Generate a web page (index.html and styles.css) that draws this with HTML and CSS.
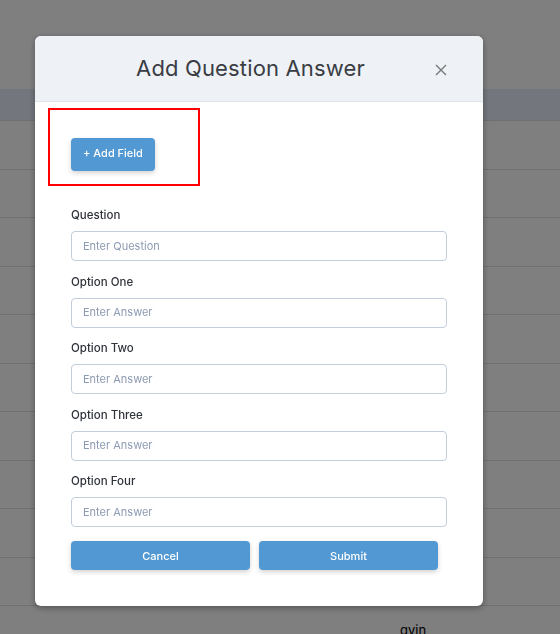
FILE: index.html
```html
<!DOCTYPE html>
<html>
<head>
<meta charset="utf-8">
<link rel="stylesheet" href="styles.css">
</head>
<body>
<div class="page">
  <div class="page-top"></div>
  <div class="table-head"></div>
  <div class="row"></div>
  <div class="row"></div>
  <div class="row"></div>
  <div class="row"></div>
  <div class="row"></div>
  <div class="row"></div>
  <div class="row"></div>
  <div class="row"></div>
  <div class="row"></div>
  <div class="row"></div>
  <div class="row last"><span class="cell-text">gvjn</span></div>
</div>
<div class="overlay">
  <div class="modal">
    <div class="modal-header">
      <h2 class="modal-title">Add Question Answer</h2>
      <button class="close" aria-label="Close">
        <svg width="12" height="12" viewBox="0 0 12 12"><path d="M1 1 L11 11 M11 1 L1 11" stroke="#777" stroke-width="1.4" fill="none"/></svg>
      </button>
    </div>
    <div class="modal-body">
      <div class="highlight">
        <button class="btn add-btn">+ Add Field</button>
      </div>
      <form class="form">
        <div class="field">
          <label class="label">Question</label>
          <input class="input" placeholder="Enter Question">
        </div>
        <div class="field">
          <label class="label">Option One</label>
          <input class="input" placeholder="Enter Answer">
        </div>
        <div class="field">
          <label class="label">Option Two</label>
          <input class="input" placeholder="Enter Answer">
        </div>
        <div class="field">
          <label class="label">Option Three</label>
          <input class="input" placeholder="Enter Answer">
        </div>
        <div class="field">
          <label class="label">Option Four</label>
          <input class="input" placeholder="Enter Answer">
        </div>
        <div class="actions">
          <button type="button" class="btn action-btn">Cancel</button>
          <button type="button" class="btn action-btn">Submit</button>
        </div>
      </form>
    </div>
  </div>
</div>
</body>
</html>
```
FILE: styles.css
```css
* { box-sizing: border-box; }
html, body { margin: 0; padding: 0; }
body {
  width: 560px;
  height: 634px;
  overflow: hidden;
  background: #ffffff;
  font-family: Inter, "Open Sans", sans-serif;
}
.page { height: 634px; }
.page-top { height: 89px; }
.table-head { height: 32px; background: #e6eefa; border-bottom: 1px solid #dcdce6; }
.row { height: 48.5px; border-bottom: 1px solid #dedee8; position: relative; }
.row.last { border-bottom: none; }
.cell-text {
  position: absolute;
  left: 400px;
  top: 16px;
  font-size: 13px;
  color: #000;
}
.overlay {
  position: fixed;
  inset: 0;
  background: rgba(0,0,0,0.5);
  padding-top: 36px;
  padding-left: 35px;
}
.modal {
  width: 448px;
  height: 570px;
  background: #fff;
  border-radius: 6px;
  overflow: hidden;
  box-shadow: 0 2px 6px rgba(0,0,0,0.35);
}
.modal-header {
  height: 66px;
  background: #eef2f7;
  border-bottom: 1px solid #dfe3ea;
  display: flex;
  align-items: center;
  padding: 0 24px 0 43px;
}
.modal-title {
  flex: 1;
  margin: 0;
  text-align: center;
  font-weight: 400;
  font-size: 22px;
  color: #3a3d44;
  letter-spacing: 0.15px;
  padding-bottom: 2px;
}
.close {
  width: 36px;
  height: 30px;
  border: none;
  background: none;
  padding: 0;
  display: flex;
  align-items: center;
  justify-content: center;
  margin-top: 2px;
}
.modal-body { padding: 6px 36px 0 13px; }
.highlight {
  width: 152px;
  height: 78px;
  border: 2px solid #ff0000;
  padding: 28px 0 0 21px;
}
.btn {
  border: none;
  background: #5299d3;
  color: #fff;
  font-family: inherit;
  font-weight: 500;
  font-size: 11px;
  border-radius: 4px;
  box-shadow: 0 2px 5px rgba(0,0,0,0.18);
}
.add-btn { width: 84px; height: 33px; padding: 0 0 3px; }
.form { padding: 20px 0 0 23px; }
.field { display: flex; flex-direction: column; margin-bottom: 11.5px; }
.label {
  font-size: 11.5px;
  line-height: 16px;
  font-weight: 500;
  color: #2e3239;
  padding-top: 1px;
  margin-bottom: 8px;
}
.input {
  height: 30px;
  border: 1px solid #c3cedd;
  border-radius: 4px;
  padding: 0 11px 1px;
  font-family: inherit;
  font-size: 11px;
  color: #333;
  outline: none;
}
.input::placeholder { color: #8d9bb3; }
.actions { display: flex; gap: 9px; margin-top: 14px; }
.action-btn { width: 179px; height: 29px; padding: 0; }
```
